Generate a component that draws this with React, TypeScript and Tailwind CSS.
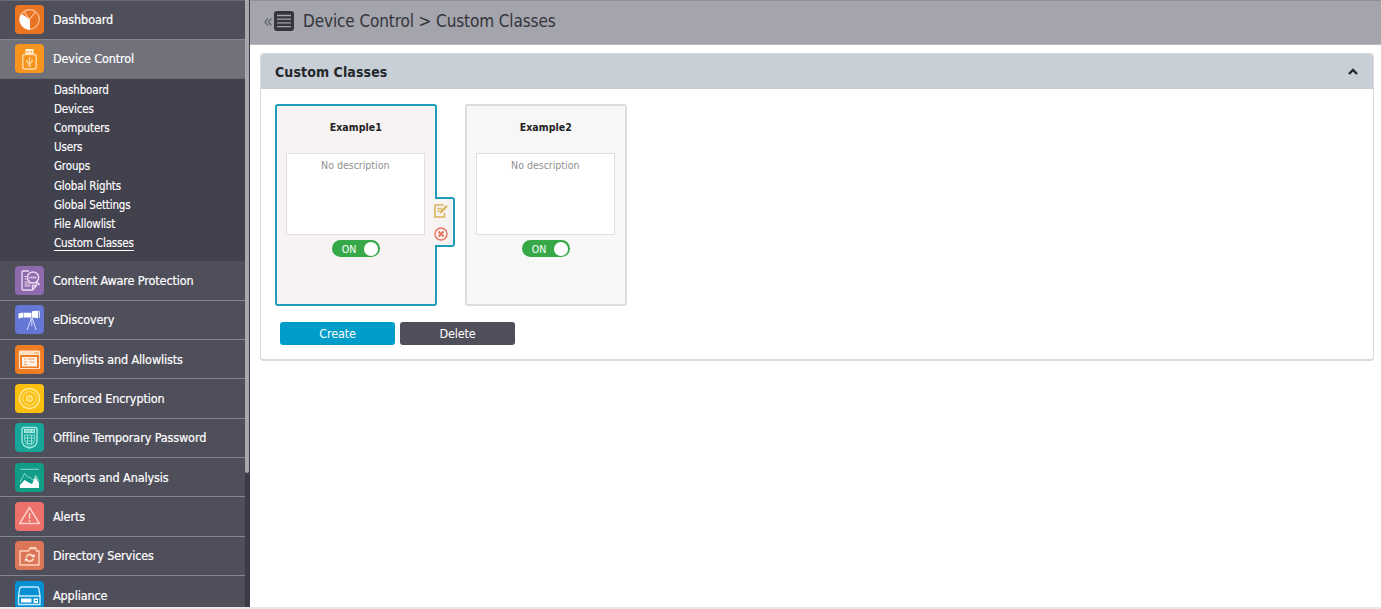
import React from "react";

const stroke = { fill: "none", stroke: "currentColor", strokeWidth: 1.2 } as const;

const icons: Record<string, React.ReactNode> = {
  dashboard: (
    <>
      <circle cx="14.5" cy="14.5" r="9.8" {...stroke} />
      <path d="M14.5 14.5 6.5 9.5A9.8 9.8 0 0 0 14.5 24.3Z" fill="white" stroke="white" />
      <path d="M14.5 14.5 20.5 7M14.5 14.5 9 6.5" {...stroke} />
    </>
  ),
  usb: (
    <>
      <rect x="10.5" y="5" width="8" height="5.5" fill="#fff3dc" />
      <path d="M12 7h1.6v1.5H12zM15.5 7h1.6v1.5h-1.6z" fill="#f7941e" />
      <rect x="7.8" y="10.5" width="13.4" height="14.5" rx="2" {...stroke} strokeWidth="1.4" />
      <path d="M14.5 13v9M11.8 16v2l2.7 2 2.6-2.6v-2" {...stroke} />
      <circle cx="14.5" cy="21.5" r="1.3" fill="currentColor" />
    </>
  ),
  content: (
    <>
      <path d="M14 5H8q-1 0-1 1v17q0 1 1 1h9.5l4-4.5v-2" {...stroke} strokeWidth="1.4" />
      <path d="M17.5 24v-4.5h4" {...stroke} strokeWidth="1.4" />
      <circle cx="18" cy="11.5" r="5.6" {...stroke} strokeWidth="1.5" />
      <path d="m21.5 15.7 3 3.3" {...stroke} strokeWidth="1.8" />
      <path d="M9.5 10.5h2M9.5 13h2M9.5 16h5M9.5 18h6M9.5 20h6" {...stroke} />
      <path d="M14.5 11.5h7" {...stroke} strokeWidth="2.2" strokeDasharray="1.2 .6" />
    </>
  ),
  discovery: (
    <>
      <path d="m3.5 8.5 4.5-1v5l-4.5 1zM8.5 7.8h8v4.7h-8zM17 6.3l6-.6v7.5L17 12.6z" fill="white" />
      <path d="M24.3 5.8v7" {...stroke} strokeWidth="1.2" />
      <path d="M16.3 13l-4.2 12M16.8 13v8M17.3 13l3.8 12" {...stroke} strokeWidth=".9" />
    </>
  ),
  lists: (
    <>
      <rect x="4.5" y="6" width="20" height="17.5" rx="1" {...stroke} />
      <path d="M4.5 6h20v4h-20z" fill="currentColor" />
      <path d="M19.5 8h1M21 8h1M22.5 8h1" stroke="#ee7d24" />
      <rect x="7" y="12" width="15" height="9.5" fill="white" opacity=".9" />
      <path d="M9 14h2M12.5 14h7M9 17h3M14.5 17h5M9 19.5h3" stroke="#f0a25f" strokeWidth="1" />
    </>
  ),
  encryption: (
    <>
      <circle cx="14.5" cy="14.5" r="10" {...stroke} strokeWidth="1.5" />
      <circle cx="14.5" cy="14.5" r="6.8" {...stroke} strokeDasharray="2.4 .6" />
      <circle cx="14.5" cy="14.5" r="2.8" {...stroke} strokeWidth="1.5" />
      <circle cx="14.5" cy="14.5" r=".9" fill="currentColor" />
    </>
  ),
  password: (
    <>
      <path d="M8.5 4.5h12q1.5 0 1.5 1.5v11.5q0 6-7.5 7.5Q7 23.500 7 17.500V6q0-1.500 1.500-1.500z" {...stroke} strokeWidth="1.4" />
      <path d="M9 6h11v4H9z" fill="currentColor" />
      <path d="M11 8h1.5M14 8h1.2M17 8h1.5" stroke="#16a598" />
      <path d="M9.500 12h10v5.500q-1 4-5 5.300-4-1.300-5-5.300zM10 15h9M10.500 18h8M11.500 20.500h6M12.500 12v9M16.500 12v9" {...stroke} strokeWidth=".8" />
    </>
  ),
  reports: (
    <>
      <path d="M5.5 6.3h18.5" {...stroke} strokeWidth=".8" />
      <path d="M5 25v-3l4.500-5 4 2.500 3.500 1.500L20.500 14l1.500 3 2 3v5z" fill="white" />
      <path d="m5 19 4.500-8.500 3 3.500 3 .5 2.500 3 3-5 3 6" {...stroke} strokeWidth=".8" />
    </>
  ),
  alerts: (
    <>
      <path d="m14.5 5.5 9.8 16h-19.6z" {...stroke} strokeWidth="1.5" strokeLinejoin="round" />
      <path d="M14.5 11v6M14.5 18v1.700" {...stroke} strokeWidth="1.5" />
    </>
  ),
  directory: (
    <>
      <path d="M5 10h8.500l1-2.500H21l.5 2.500H24v14H5z" {...stroke} strokeWidth="1.4" strokeLinejoin="round" />
      <path d="M15 6.5h6" {...stroke} />
      <path d="M11.200 16.500a3.600 3.600 0 0 1 6.200-1.800M18.300 17.300a3.600 3.600 0 0 1-6.200 1.800" {...stroke} strokeWidth="1.9" />
      <path d="m19.700 13-.3 3.500-3.200-1zM9.800 20.800l.4-3.500 3 1z" fill="white" />
    </>
  ),
  appliance: (
    <>
      <path d="M3.500 15 4.700 7.500Q5 6 6.500 6h15.500q1.500 0 1.800 1.500L25 15v8.500H3.500zM3.500 15H25" {...stroke} strokeWidth="1.4" />
      <path d="M6 17.500h10.500v4H6zM18.500 17.500H23v4.500h-4.500z" fill="white" />
      <path d="M20 19.500h2" stroke="#078fd1" />
    </>
  ),
};

type Row = { label: string; icon: string; color: string };

const rows: Row[] = [
  { label: "Content Aware Protection", icon: "content", color: "bg-[#8e6bad] text-[#e9dcf4]" },
  { label: "eDiscovery", icon: "discovery", color: "bg-[#6477d4] text-[#dfe4ff]" },
  { label: "Denylists and Allowlists", icon: "lists", color: "bg-[#ee7d24] text-[#ffe2c6]" },
  { label: "Enforced Encryption", icon: "encryption", color: "bg-[#fbbf0f] text-[#ffe68f]" },
  { label: "Offline Temporary Password", icon: "password", color: "bg-[#16a598] text-[#a5e8df]" },
  { label: "Reports and Analysis", icon: "reports", color: "bg-[#119c87] text-[#b0e8dc]" },
  { label: "Alerts", icon: "alerts", color: "bg-[#ed716b] text-[#ffd0c6]" },
  { label: "Directory Services", icon: "directory", color: "bg-[#db7659] text-[#ffd2bb]" },
  { label: "Appliance", icon: "appliance", color: "bg-[#078fd1] text-[#c8ebff]" },
];

const subItems = ["Dashboard", "Devices", "Computers", "Users", "Groups", "Global Rights", "Global Settings", "File Allowlist", "Custom Classes"];

function NavRow({ row, active = false }: { row: Row; active?: boolean }) {
  return (
    <div className={`flex h-[39.35px] shrink-0 items-center border-b pl-[14.5px] ${active ? "border-[#696974] bg-[#70717b]" : "border-[#858590] bg-[#4f4e5b]"}`}>
      <span className={`mr-[9.5px] flex size-[29px] shrink-0 overflow-hidden rounded-[4px] ${row.color}`}>
        <svg viewBox="0 0 29 29" className="size-full">{icons[row.icon]}</svg>
      </span>
      <span className={`text-[12.5px] leading-4 tracking-[-0.11px] whitespace-nowrap text-white [-webkit-text-stroke:0.2px_white] ${active ? "" : "mt-[1.4px]"}`}>{row.label}</span>
    </div>
  );
}

function Toggle() {
  return (
    <div className="mt-[5px] flex h-[17px] w-12 items-center justify-between rounded-full bg-[#37a847] pr-[1.5px] pl-[10px]">
      <span className="mt-px text-[10.5px] leading-none text-white">ON</span>
      <span className="size-[14px] rounded-full bg-white" />
    </div>
  );
}

function ClassCard({ name, selected = false }: { name: string; selected?: boolean }) {
  return (
    <div className={`relative flex h-[201.5px] w-[161.5px] flex-col items-center rounded-[3px] border-2 ${selected ? "border-[#1f9cb8] bg-[#f6f3f2]" : "border-[#dddddd] bg-[#f7f7f7]"}`}>
      <h3 className="mt-[13px] text-[10.5px] leading-4 font-bold tracking-[0.05px] text-[#222222]">{name}</h3>
      <div className="mt-[18px] mr-[1px] flex h-[82px] w-[139px] justify-center border border-[#dfdfdf] bg-white pt-[3px]">
        <span className="text-[10.5px] leading-4 text-[#909090]">No description</span>
      </div>
      <Toggle />
      {selected && (
        <div className="absolute top-[91px] -right-5 flex h-[50px] w-5 flex-col items-start gap-[9px] rounded-r-[3px] border-2 border-l-0 border-[#1f9cb8] bg-[#f6f3f2] pt-[5px]">
          <div className="absolute top-0 -left-[2px] h-[46px] w-[3px] bg-[#f6f3f2]" />
          <svg viewBox="0 0 14 14" className="relative -ml-px size-[14px] shrink-0">
            <path d="M9.500 1H1v12h9.500V9M3.500 4.500h4M3.500 7h2" fill="none" stroke="#d9b45b" strokeWidth="1.6" />
            <path d="m5.500 9.500.8-2.700L12.200 1l1.600 1.500-5.600 6z" fill="#d9b45b" />
          </svg>
          <svg viewBox="0 0 14 14" className="relative -ml-px size-[14px] shrink-0">
            <circle cx="7" cy="7" r="6" fill="none" stroke="#ec7261" strokeWidth="1.4" />
            <path d="m4.500 4.500 5 5m0-5-5 5" stroke="#ec7261" strokeWidth="1.9" />
          </svg>
        </div>
      )}
    </div>
  );
}

export default function App() {
  return (
    <div className="flex h-[609px] w-[1381px] overflow-hidden border-b-2 border-[#e9e9e9] bg-white font-['DejaVu_Sans_Condensed','DejaVu_Sans',sans-serif] [font-stretch:condensed]">
      <aside className="flex w-[250px] shrink-0 bg-[#3c3b48]">
        <nav className="flex w-[245px] shrink-0 flex-col overflow-hidden border-t border-[#696974] bg-[#4f4e5b]">
          <div className="-mt-[0.6px] flex flex-col">
            <NavRow row={{ label: "Dashboard", icon: "dashboard", color: "bg-[#e97522] text-[#ffc398]" }} />
            <NavRow active row={{ label: "Device Control", icon: "usb", color: "bg-[#f7941e] text-[#ffdaa4]" }} />
            <ul className="flex h-[182.100px] flex-col bg-[#42414e] pt-[1px] pl-[54px]">
              {subItems.map((s) => (
                <li key={s} className="flex h-[19.2px] items-center">
                  <a className={`text-[11.5px] leading-[14px] tracking-[-0.15px] whitespace-nowrap text-white [-webkit-text-stroke:0.15px_white] ${s === "Custom Classes" ? "-mb-px border-b border-white" : ""}`}>{s}</a>
                </li>
              ))}
            </ul>
            {rows.map((r) => (
              <NavRow key={r.label} row={r} />
            ))}
          </div>
        </nav>
        <div className="h-[473px] w-1 rounded-b-[2px] bg-[#a7a7ae]" />
      </aside>
      <main className="flex min-w-0 flex-1 flex-col">
        <header className="flex h-[45px] shrink-0 items-center border-t border-b border-t-[#8f8f98] border-b-[#b8b8be] bg-[#a3a4ac] pb-[3px] pl-[14px]">
          <svg viewBox="0 0 8 8" className="mt-[2px] size-2" fill="none" stroke="#696a72" strokeWidth="1.4">
            <path d="M4 .5 1 4l3 3.500M7.500.5l-3 3.500 3 3.500" />
          </svg>
          <svg viewBox="0 0 20 20" className="ml-[2px] size-5">
            <rect width="20" height="20" rx="3" fill="#35363b" />
            <path d="M3 4.500h14M3 8.200h14M3 11.900h14M3 15.600h14" stroke="#a3a4ac" strokeWidth="1.3" />
          </svg>
          <h1 className="ml-[9px] text-[17px] leading-6 tracking-[-0.11px] whitespace-nowrap text-[#34353a]">Device Control &gt; Custom Classes</h1>
        </header>
        <section className="mt-[8px] ml-[10px] flex h-[308px] w-[1114px] shrink-0 flex-col rounded-[4px] border border-[#d9dadd] border-b-2">
          <div className="flex h-[35px] shrink-0 items-center justify-between rounded-t-[3px] bg-[#c8cfd7] pr-[15px] pl-[14px]">
            <h2 className="text-[14px] leading-5 font-bold tracking-[0.1px] whitespace-nowrap text-[#24272b]">Custom Classes</h2>
            <svg viewBox="0 0 10 7" className="w-[10px]" fill="none" stroke="#25282c" strokeWidth="2.4">
              <path d="m1 6 4-4 4 4" />
            </svg>
          </div>
          <div className="mt-[15px] ml-[14px] flex gap-[28.500px]">
            <ClassCard name="Example1" selected />
            <ClassCard name="Example2" />
          </div>
          <div className="mt-[16.500px] ml-[19px] flex gap-[5px] text-[12.5px] leading-4 tracking-[-0.15px] text-white">
            <button className="h-[23px] w-[115px] rounded-[3px] bg-[#009dca]">Create</button>
            <button className="h-[23px] w-[115px] rounded-[3px] bg-[#4f4e5b]">Delete</button>
          </div>
        </section>
      </main>
    </div>
  );
}
